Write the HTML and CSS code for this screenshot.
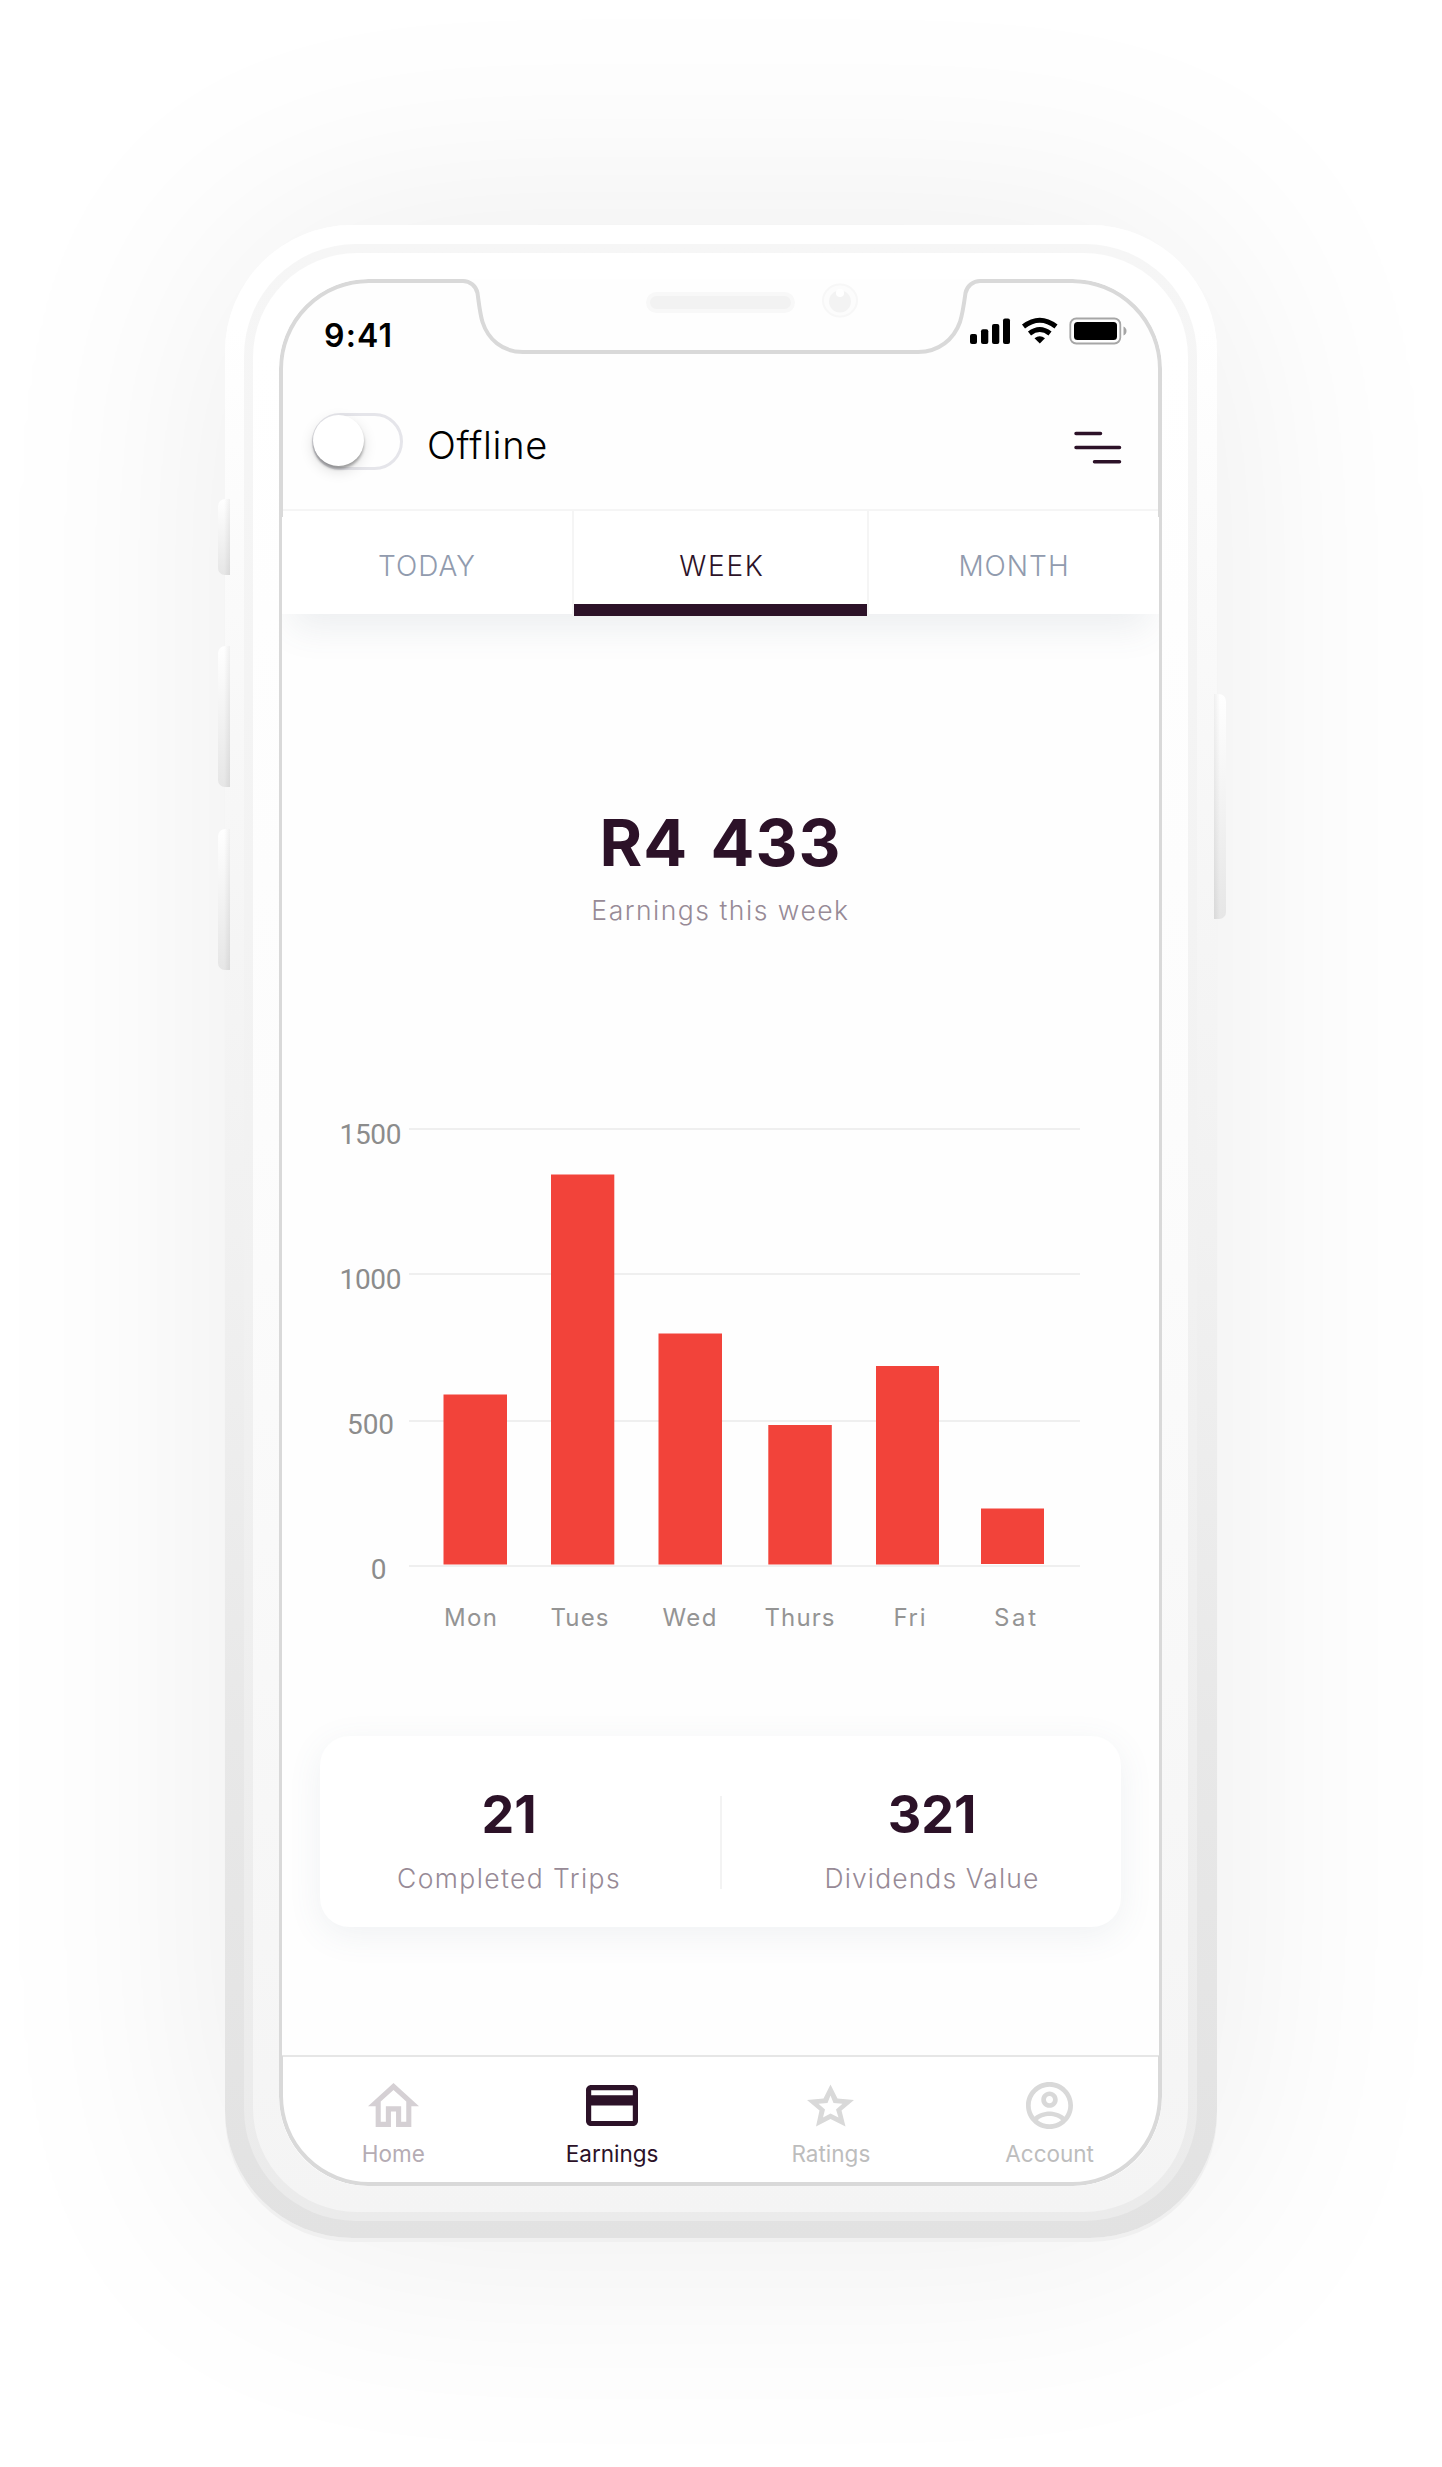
FILE: index.html
```html
<!DOCTYPE html>
<html lang="en">
<head>
<meta charset="utf-8">
<title>Earnings</title>
<link rel="stylesheet" href="styles.css">
</head>
<body>
<main class="device">
  <span class="side-button mute"></span>
  <span class="side-button volume-up"></span>
  <span class="side-button volume-down"></span>
  <span class="side-button power"></span>
  <div class="ring"><div class="bezel">
    <div class="screen">
      <svg class="outline" viewBox="0 0 883 1907" aria-hidden="true">
        <path d="M2 238V90A88 88 0 0 1 90 2H184C191 2 197 7 198.500 14C200 25 201 35 203.500 43C209 60 223 73 244 73H639C660 73 675 60 681 43C683.500 35 685 25 686.500 14C688 7 694 2 701 2H793A88 88 0 0 1 881 90V238M881 1777V1817A88 88 0 0 1 793 1905H90A88 88 0 0 1 2 1817V1777" fill="none" stroke="#d9d9d9" stroke-width="4"/>
        <path d="M1.500 238V1777M881.500 238V1777" stroke="#d9d9d9" stroke-width="3"/>
        <rect x="369" y="15" width="145" height="17" rx="8.500" fill="#f2f2f2" stroke="#f8f8f8" stroke-width="4"/>
        <ellipse cx="561" cy="21.500" rx="17" ry="16" fill="#fcfcfc" stroke="#f7f7f7" stroke-width="2"/>
        <circle cx="561" cy="22.500" r="11" fill="#f3f3f3"/>
        <circle cx="561" cy="14" r="4" fill="#fff"/>
      </svg>

      <div class="status-bar">
        <span class="clock">9:41</span>
        <svg class="status-icons" viewBox="0 0 158 28">
          <rect x="0" y="17" width="7" height="10" rx="2"/>
          <rect x="11" y="12.300" width="7.300" height="14.700" rx="2"/>
          <rect x="22" y="7" width="7.300" height="20" rx="2"/>
          <rect x="33" y="1.500" width="7" height="25.500" rx="2"/>
          <g fill="none" stroke="#000" stroke-width="5">
            <path d="M53.500 9.500Q69.800 -3 86 9.500"/>
            <path d="M59.500 16.500Q69.800 8.500 80 16.500"/>
          </g>
          <path d="M64.500 21.300Q69.800 17 75 21.300L69.800 26.500Z"/>
          <rect x="100.300" y="1.500" width="50" height="25" rx="6" fill="none" stroke="#a6a6a6" stroke-width="1.800"/>
          <rect x="104" y="5" width="43" height="18" rx="3.500"/>
          <path d="M153.500 9.500Q156.500 11 156.500 14T153.500 18.500Z" fill="#a6a6a6"/>
        </svg>
      </div>

      <header class="header">
        <span class="switch"><span class="knob"></span></span>
        <span class="state">Offline</span>
        <svg class="menu" viewBox="0 0 48 33"><path d="M2 2.500H26.500M2 16.500H45.500M20.500 30.700H45.500"/></svg>
      </header>

      <nav class="tabs">
        <a class="tab">TODAY</a>
        <a class="tab active">WEEK</a>
        <a class="tab">MONTH</a>
      </nav>

      <section class="summary">
        <div class="amount">R4 433</div>
        <div class="caption">Earnings this week</div>
      </section>

      <svg class="chart" viewBox="0 0 877 550">
        <path class="grid" d="M127 29H798M127 174H798M127 321H798M127 466H798"/>
        <g class="bars">
          <rect x="161.500" y="294.500" width="63.500" height="170"/>
          <rect x="269" y="74.500" width="63.300" height="390"/>
          <rect x="376.500" y="233.500" width="63.500" height="231"/>
          <rect x="486.300" y="325" width="63.500" height="139.500"/>
          <rect x="594" y="266" width="63" height="198.500"/>
          <rect x="699" y="408.500" width="63" height="55.500"/>
        </g>
        <g class="axis-y">
          <text x="88.500" y="44.400" textLength="62">1500</text>
          <text x="88.500" y="189.400" textLength="62">1000</text>
          <text x="88.500" y="334.400" textLength="47">500</text>
          <text x="96.500" y="479">0</text>
        </g>
        <g class="axis-x">
          <text x="188.500" y="525.600" textLength="53">Mon</text>
          <text x="297.500" y="525.600" textLength="58">Tues</text>
          <text x="407.500" y="525.600" textLength="54">Wed</text>
          <text x="517.500" y="525.600" textLength="70">Thurs</text>
          <text x="627.500" y="525.600" textLength="32">Fri</text>
          <text x="733" y="525.600" textLength="42">Sat</text>
        </g>
      </svg>

      <section class="stats">
        <div class="stat"><div class="value">21</div><div class="label">Completed Trips</div></div>
        <div class="stat"><div class="value">321</div><div class="label dividends">Dividends Value</div></div>
      </section>

      <nav class="tab-bar">
        <a class="item home">
          <svg class="icon-home" viewBox="2 3 20 17" preserveAspectRatio="none"><path d="M12 5.690l5 4.500V18h-2v-6H9v6H7v-7.810l5-4.500M12 3L2 12h3v8h6v-6h2v6h6v-8h3L12 3z"/></svg>
          <span>Home</span></a>
        <a class="item current">
          <svg class="icon-card" viewBox="2 4 20 16" preserveAspectRatio="none"><path d="M20 4H4c-1.110 0-1.990.890-1.990 2L2 18c0 1.110.890 2 2 2h16c1.110 0 2-.890 2-2V6c0-1.110-.890-2-2-2zm0 14H4v-6h16v6zm0-10H4V6h16v2z"/></svg>
          <span>Earnings</span></a>
        <a class="item">
          <svg class="icon-star" viewBox="0 0 47 42"><path fill-rule="evenodd" d="M23.500 0L30.500 14L47 15.500L34.500 26L38.500 42L23.500 34.500L9 42L12.500 26L0 15.500L16.500 14ZM23.500 11L20.500 18.500L11.500 19.200L18 25L16 33L23.500 29L31.500 33L29 25L35.500 19.200L26.500 18.500Z"/></svg>
          <span>Ratings</span></a>
        <a class="item">
          <svg class="icon-account" viewBox="2 2 20 20"><path d="M12 2C6.480 2 2 6.480 2 12s4.480 10 10 10 10-4.480 10-10S17.520 2 12 2zM7.070 18.280c.430-.900 3.050-1.780 4.930-1.780s4.510.880 4.930 1.780C15.570 19.360 13.860 20 12 20s-3.570-.640-4.930-1.720zm11.290-1.450c-1.430-1.740-4.900-2.330-6.360-2.330s-4.930.590-6.360 2.330C4.620 15.490 4 13.820 4 12c0-4.410 3.590-8 8-8s8 3.590 8 8c0 1.820-.620 3.490-1.640 4.830zM12 6c-1.940 0-3.500 1.560-3.500 3.500S10.060 13 12 13s3.500-1.560 3.500-3.500S13.940 6 12 6zm0 5c-.830 0-1.500-.670-1.500-1.500S11.170 8 12 8s1.500.670 1.500 1.500S12.830 11 12 11z"/></svg>
          <span>Account</span></a>
      </nav>
    </div>
  </div></div>
</main>
</body>
</html>
```
FILE: styles.css
```css
* { box-sizing: border-box; }

body {
  margin: 0;
  height: 2467px;
  padding-top: 225px;
  background: #fff;
  color: #2c1228;
  font-family: Inter, "Liberation Sans", sans-serif;
  overflow: hidden;
}

.device {
  position: relative;
  width: 992px;
  height: 2013px;
  margin-left: 225px;
  padding: 19px 20px 17px 19px;
  border-radius: 127px;
  background: linear-gradient(#fff 5%, #f9f9f9 22%, #f1f1f1 50%, #e8e8e8 75%, #e2e2e2);
  box-shadow: 0 4px 0 #f0f0f0, 0 0 260px rgba(0, 0, 0, .08);
}

.ring {
  height: 1977px;
  padding: 9px;
  border-radius: 112px;
  background: linear-gradient(#f6f6f6, #f2f2f2 45%, #ebebeb);
}

.bezel {
  height: 1959px;
  padding: 26px;
  border-radius: 104px;
  background: linear-gradient(#fff 5%, #fcfcfc 45%, #f4f4f4);
}

.side-button {
  position: absolute;
  left: -7px;
  width: 12px;
  border-radius: 7px 0 0 7px;
  background: linear-gradient(90deg, transparent 50%, rgba(0, 0, 0, .06)), linear-gradient(#fff, #e6e6e6);
}
.mute { top: 274px; height: 76px; }
.volume-up { top: 421px; height: 141px; }
.volume-down { top: 604px; height: 141px; }
.power {
  top: 469px;
  left: auto;
  right: -9px;
  height: 225px;
  border-radius: 0 7px 7px 0;
  background: linear-gradient(270deg, transparent 50%, rgba(0, 0, 0, .06)), linear-gradient(#fff, #e6e6e6);
}

.screen {
  position: relative;
  width: 883px;
  height: 1907px;
  padding: 0 3px;
  display: flex;
  flex-direction: column;
  border-radius: 89px;
  background: #fefefe;
  overflow: hidden;
}
.outline { position: absolute; left: 0; top: 0; width: 883px; height: 1907px; z-index: 2; }

.status-bar {
  height: 86px;
  flex: none;
  display: flex;
  justify-content: space-between;
  padding: 38px 31px 0 42px;
}
.clock { font-size: 32px; line-height: 38px; font-weight: 600; letter-spacing: 1.200px; color: #000; }
.status-icons { width: 158px; height: 28px; }

.header {
  height: 144px;
  flex: none;
  display: flex;
  align-items: center;
  padding: 8px 37px 0 30px;
}
.switch {
  width: 91px;
  height: 57px;
  border: 3.500px solid #e5e5ea;
  border-radius: 29px;
}
.knob {
  display: block;
  width: 51px;
  height: 51px;
  margin: -.500px 0 0 -2px;
  border-radius: 50%;
  background: #fff;
  box-shadow: 0 3px 3px rgba(0, 0, 0, .32), 0 5px 14px rgba(0, 0, 0, .13);
}
.state { flex: 1; margin: 7px 0 0 24px; font-size: 38px; line-height: 44px; letter-spacing: .700px; font-weight: 350; color: #000; }
.menu { width: 48px; height: 33px; margin-top: 12px; }
.menu path { stroke: #2c1228; stroke-width: 3.500; stroke-linecap: round; }

.tabs {
  height: 105px;
  flex: none;
  display: flex;
  border-top: 2px solid #f5f5f5;
  background: #fff;
  box-shadow: 0 24px 36px -10px rgba(80, 100, 115, .1);
}
.tab {
  flex: 1;
  display: flex;
  justify-content: center;
  padding-top: 38px;
  font-size: 28px;
  line-height: 34px;
  letter-spacing: 1px;
  font-weight: 350;
  color: #919bae;
}
.tab.active {
  height: 105px;
  padding-left: 3px;
  border: solid #f5f5f5;
  border-width: 0 2px;
  letter-spacing: 1.700px;
  color: #2c1228;
  background: linear-gradient(#2c1228, #2c1228) bottom / 100% 12px no-repeat;
}

.summary { padding-top: 197px; text-align: center; }
.amount { font-size: 65px; line-height: 64px; font-weight: 650; letter-spacing: 1px; word-spacing: 6px; }
.caption { margin-top: 19px; font-size: 26.500px; line-height: 32px; letter-spacing: 1.500px; font-weight: 350; color: #978a96; }

.chart { width: 877px; height: 550px; flex: none; margin-top: 174px; }
.grid { stroke: #efefef; stroke-width: 2; }
.bars { fill: #f2433a; }
.axis-y, .axis-x { text-anchor: middle; fill: #8c8c8c; }
.axis-y { font: 28px Roboto, sans-serif; }
.axis-x { font-size: 24px; fill: #949494; }

.stats {
  width: 801px;
  height: 191px;
  flex: none;
  display: flex;
  justify-content: space-between;
  margin: 86px 0 0 38px;
  border-radius: 29px;
  background: linear-gradient(#f3f3f3, #f3f3f3) 400px 60px / 2px 93px no-repeat #fff;
  box-shadow: 0 8px 34px rgba(80, 110, 130, .085);
}
.stat { width: 378px; padding-top: 54px; text-align: center; }
.value { font-size: 52px; line-height: 50px; font-weight: 700; }
.label { margin-top: 23px; font-size: 26.500px; line-height: 30px; letter-spacing: 1.400px; font-weight: 350; color: #978a96; }
.label.dividends { letter-spacing: 1.100px; }

.tab-bar {
  flex: 1;
  display: flex;
  margin-top: 128px;
  padding-left: 2px;
  border-top: 2px solid #e6e6e6;
  background: #fff;
}
.item {
  flex: 1;
  display: grid;
  grid-template-rows: 80px 34px;
  align-content: start;
  justify-items: center;
  align-items: center;
  font-size: 22.500px;
  line-height: 34px;
  color: #bdbdbd;
  fill: #d9d9d9;
}
.item svg { margin-top: 16px; }
.icon-home { width: 51px; height: 44px; }
.icon-card { width: 52px; height: 41px; }
.icon-star { width: 47px; height: 45px; }
.icon-account { width: 47px; height: 47px; }
.item.home { color: #b5acb4; fill: #d5d0d4; }
.item.current { color: #2c1228; fill: #2c1228; }
```
